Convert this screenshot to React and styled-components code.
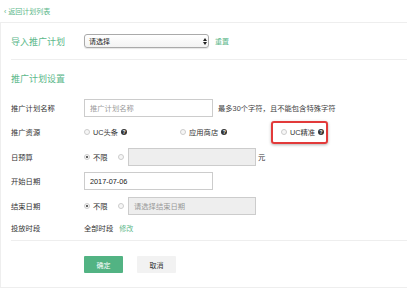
import React from 'react';
import styled, { createGlobalStyle } from 'styled-components';

const GREEN = '#5cb88a';

const GlobalStyle = createGlobalStyle`
    body {
        margin: 0;
        background: #fff;
        font-family: "Liberation Sans", "Noto Sans CJK SC", sans-serif;
        color: #333;
    }
`;

const Page = styled.div`
    width: 407px;
    height: 288px;
    overflow: hidden;
`;

const TopBar = styled.div`
    height: 22px;
    padding-left: 4px;
    display: flex;
    align-items: center;
    font-size: 7px;
    color: ${GREEN};
`;

const Panel = styled.div`
    border: 1px solid #eee;
    border-right: none;
    height: 264px;
    padding-left: 10px;
`;

const ImportRow = styled.div`
    height: 36px;
    display: flex;
    align-items: center;
    border-bottom: 1px solid #eee;
`;

const Title = styled.div`
    width: 73px;
    font-size: 9px;
    color: ${GREEN};
`;

const Select = styled.div`
    width: 118px;
    height: 12px;
    border: 1px solid #aaa;
    border-radius: 3px;
    padding: 0 1px 0 4px;
    display: flex;
    align-items: center;
    justify-content: space-between;
    font-size: 7px;
    color: #222;
    background: linear-gradient(#fff, #f3f3f3);
    box-shadow: 0 1px 1px rgba(0, 0, 0, 0.1);
`;

const Arrows = styled.span`
    display: flex;
    flex-direction: column;
    align-items: center;
    gap: 1px;

    &::before,
    &::after {
        content: '';
        border-left: 2px solid transparent;
        border-right: 2px solid transparent;
    }
    &::before { border-bottom: 3px solid #222; }
    &::after { border-top: 3px solid #222; }
`;

const Link = styled.span`
    margin-left: 6px;
    font-size: 7px;
    color: ${GREEN};
`;

const SectionHead = styled.div`
    height: 36px;
    display: flex;
    align-items: center;
`;

const Row = styled.div`
    height: ${p => p.h}px;
    display: flex;
    align-items: center;
    font-size: 7.3px;
`;

const Label = styled.div`
    width: 73px;
    flex-shrink: 0;
    color: #333;
`;

const Input = styled.div`
    box-sizing: border-box;
    width: ${p => p.w}px;
    height: 18px;
    border: 1px solid #ccc;
    padding-left: 5px;
    display: flex;
    align-items: center;
    font-size: 7.3px;
    color: ${p => (p.placeholder ? '#999' : '#222')};
    background: ${p => (p.disabled ? '#eee' : '#fff')};
`;

const Hint = styled.span`
    margin-left: 5px;
    color: #444;
`;

const Option = styled.label`
    display: flex;
    align-items: center;
    width: ${p => (p.w ? `${p.w}px` : 'auto')};
    color: #333;
`;

const Highlight = styled.div`
    box-sizing: border-box;
    width: 57px;
    height: 23px;
    border: 2px solid #e23a3a;
    border-radius: 3px;
    padding-left: 8px;
    display: flex;
    align-items: center;
    box-shadow: 0 1px 3px rgba(0, 0, 0, 0.3);
`;

const Radio = styled.span`
    box-sizing: border-box;
    width: 6px;
    height: 6px;
    border: 1px solid #ccc;
    border-radius: 50%;
    margin-right: ${p => p.gap ?? 3}px;
    display: inline-flex;
    align-items: center;
    justify-content: center;
    background: #f6f6f6;

    &::after {
        content: '';
        width: 2px;
        height: 2px;
        border-radius: 50%;
        background: ${p => (p.checked ? '#333' : 'transparent')};
    }
`;

const Help = styled.span`
    width: 6px;
    height: 6px;
    margin-left: 3px;
    border-radius: 50%;
    background: #333;
    color: #fff;
    font-size: 5px;
    font-weight: bold;
    line-height: 6px;
    text-align: center;
`;

const Unit = styled.span`
    margin-left: 2px;
`;

const Divider = styled.div`
    border-top: 1px solid #eee;
    margin-top: 3px;
`;

const Buttons = styled.div`
    display: flex;
    gap: 14px;
    padding: 15px 0 0 73px;
`;

const Button = styled.div`
    width: 39px;
    height: 17px;
    display: flex;
    align-items: center;
    justify-content: center;
    font-size: 7px;
    border-radius: 1px;
    color: ${p => (p.primary ? '#fff' : '#333')};
    background: ${p => (p.primary ? '#52b383' : '#f2f2f2')};
`;

const Unlimited = ({ children }) => (
    <>
        <Option w={34}>
            <Radio checked />不限
        </Option>
        <Radio gap={4} />
        {children}
    </>
);

const App = () => (
    <Page>
        <GlobalStyle />
        <TopBar>‹ 返回计划列表</TopBar>
        <Panel>
            <ImportRow>
                <Title>导入推广计划</Title>
                <Select>
                    请选择
                    <Arrows />
                </Select>
                <Link>重置</Link>
            </ImportRow>

            <SectionHead>
                <Title>推广计划设置</Title>
            </SectionHead>

            <Row h={24}>
                <Label>推广计划名称</Label>
                <Input w={129} placeholder>推广计划名称</Input>
                <Hint>最多30个字符，且不能包含特殊字符</Hint>
            </Row>
            <Row h={24}>
                <Label>推广资源</Label>
                <Option w={96}>
                    <Radio />UC头条<Help>?</Help>
                </Option>
                <Option w={91}>
                    <Radio />应用商店<Help>?</Help>
                </Option>
                <Highlight>
                    <Option>
                        <Radio />UC精准<Help>?</Help>
                    </Option>
                </Highlight>
            </Row>
            <Row h={25}>
                <Label>日预算</Label>
                <Unlimited>
                    <Input w={128} disabled />
                    <Unit>元</Unit>
                </Unlimited>
            </Row>
            <Row h={24}>
                <Label>开始日期</Label>
                <Input w={129}>2017-07-06</Input>
            </Row>
            <Row h={26}>
                <Label>结束日期</Label>
                <Unlimited>
                    <Input w={128} disabled placeholder>请选择结束日期</Input>
                </Unlimited>
            </Row>
            <Row h={18}>
                <Label>投放时段</Label>
                <span>全部时段</span>
                <Link>修改</Link>
            </Row>
            <Divider />
            <Buttons>
                <Button primary>确定</Button>
                <Button>取消</Button>
            </Buttons>
        </Panel>
    </Page>
);

export default App;
